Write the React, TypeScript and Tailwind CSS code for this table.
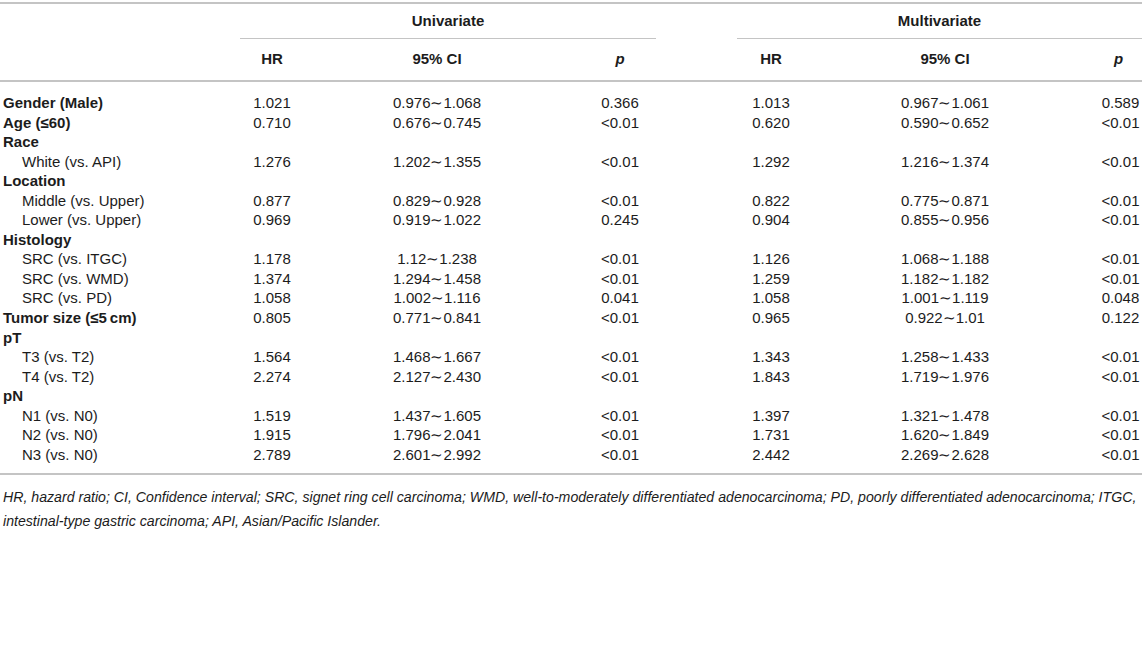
import React from 'react';

type Row = {
  label: React.ReactNode;
  indent?: boolean;
  values?: [string, string, string, string, string, string];
};

const rows: Row[] = [
  { label: 'Gender (Male)', values: ['1.021', '0.976∼1.068', '0.366', '1.013', '0.967∼1.061', '0.589'] },
  { label: 'Age (≤60)', values: ['0.710', '0.676∼0.745', '<0.01', '0.620', '0.590∼0.652', '<0.01'] },
  { label: 'Race' },
  { label: 'White (vs. API)', indent: true, values: ['1.276', '1.202∼1.355', '<0.01', '1.292', '1.216∼1.374', '<0.01'] },
  { label: 'Location' },
  { label: 'Middle (vs. Upper)', indent: true, values: ['0.877', '0.829∼0.928', '<0.01', '0.822', '0.775∼0.871', '<0.01'] },
  { label: 'Lower (vs. Upper)', indent: true, values: ['0.969', '0.919∼1.022', '0.245', '0.904', '0.855∼0.956', '<0.01'] },
  { label: 'Histology' },
  { label: 'SRC (vs. ITGC)', indent: true, values: ['1.178', '1.12∼1.238', '<0.01', '1.126', '1.068∼1.188', '<0.01'] },
  { label: 'SRC (vs. WMD)', indent: true, values: ['1.374', '1.294∼1.458', '<0.01', '1.259', '1.182∼1.182', '<0.01'] },
  { label: 'SRC (vs. PD)', indent: true, values: ['1.058', '1.002∼1.116', '0.041', '1.058', '1.001∼1.119', '0.048'] },
  { label: 'Tumor size (≤5\u2009cm)', values: ['0.805', '0.771∼0.841', '<0.01', '0.965', '0.922∼1.01', '0.122'] },
  { label: 'pT' },
  { label: 'T3 (vs. T2)', indent: true, values: ['1.564', '1.468∼1.667', '<0.01', '1.343', '1.258∼1.433', '<0.01'] },
  { label: 'T4 (vs. T2)', indent: true, values: ['2.274', '2.127∼2.430', '<0.01', '1.843', '1.719∼1.976', '<0.01'] },
  { label: 'pN' },
  { label: 'N1 (vs. N0)', indent: true, values: ['1.519', '1.437∼1.605', '<0.01', '1.397', '1.321∼1.478', '<0.01'] },
  { label: 'N2 (vs. N0)', indent: true, values: ['1.915', '1.796∼2.041', '<0.01', '1.731', '1.620∼1.849', '<0.01'] },
  { label: 'N3 (vs. N0)', indent: true, values: ['2.789', '2.601∼2.992', '<0.01', '2.442', '2.269∼2.628', '<0.01'] },
];

const COLS = 'grid grid-cols-[240px_64px_266px_100px_67px_68px_280px_57px]';

const App = () => {
  return (
    <div className="w-[1142px] bg-white pt-[2px] font-['Liberation_Sans',Arial,sans-serif] text-[15px] text-[#1c1c1c]">
      <div className="border-t-2 border-[#c4c4c4]">
        {/* header */}
        <div className={`${COLS} border-b-2 border-[#c4c4c4]`}>
          <div className="row-span-2" />
          <div className="col-span-3 mr-[14px] flex h-[35px] items-center justify-center border-b border-[#c4c4c4] font-bold">
            Univariate
          </div>
          <div />
          <div className="col-span-3 flex h-[35px] items-center justify-center border-b border-[#c4c4c4] font-bold">
            Multivariate
          </div>
          <div className="flex h-[41px] items-center justify-center font-bold">HR</div>
          <div className="flex items-center justify-center font-bold">95% CI</div>
          <div className="flex items-center justify-center font-bold italic">p</div>
          <div />
          <div className="flex items-center justify-center font-bold">HR</div>
          <div className="flex items-center justify-center font-bold">95% CI</div>
          <div className="flex items-center justify-center pl-[10px] font-bold italic">p</div>
        </div>

        {/* body */}
        <div className="border-b-2 border-[#c4c4c4] py-[10px]">
          {rows.map((row, i) => (
            <div key={i} className={`${COLS} h-[19.55px] items-center`}>
              <div className={row.indent ? 'pl-[22px]' : 'pl-[3px] font-bold'}>{row.label}</div>
              {row.values ? (
                <>
                  <div className="text-center">{row.values[0]}</div>
                  <div className="text-center">{row.values[1]}</div>
                  <div className="text-center">{row.values[2]}</div>
                  <div />
                  <div className="text-center">{row.values[3]}</div>
                  <div className="text-center">{row.values[4]}</div>
                  <div className="pl-[14px] text-center">{row.values[5]}</div>
                </>
              ) : null}
            </div>
          ))}
        </div>

        <p className="pl-[3px] pr-[1px] pt-[10px] text-[14.15px] italic leading-[24px]">
          HR, hazard ratio; CI, Confidence interval; SRC, signet ring cell carcinoma; WMD, well-to-moderately
          differentiated adenocarcinoma; PD, poorly differentiated adenocarcinoma; ITGC, intestinal-type gastric
          carcinoma; API, Asian/Pacific Islander.
        </p>
      </div>
    </div>
  );
};

export default App;
